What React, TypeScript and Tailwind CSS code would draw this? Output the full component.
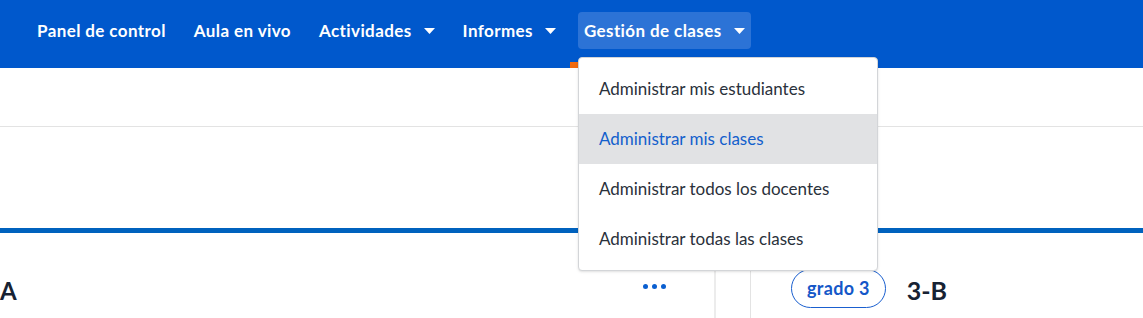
import { useState } from "react";

const navItems = [
  { label: "Panel de control", caret: false },
  { label: "Aula en vivo", caret: false },
  { label: "Actividades", caret: true },
  { label: "Informes", caret: true },
  { label: "Gestión de clases", caret: true, open: true },
];

const menuItems = [
  "Administrar mis estudiantes",
  "Administrar mis clases",
  "Administrar todos los docentes",
  "Administrar todas las clases",
];

function Caret() {
  return (
    <svg width="11" height="6" viewBox="0 0 11 6" className="ml-3 fill-white">
      <path d="M0 0h11L5.5 6z" />
    </svg>
  );
}

function App() {
  const [active] = useState(1);

  return (
    <div className="w-[1143px] h-[318px] overflow-hidden bg-white font-['Lato',sans-serif] text-[#1c2430]">
      <header className="h-[68px] bg-[#0058cc] flex items-start pt-3 pl-[31px]">
        <nav className="flex gap-4">
          {navItems.map((n) => (
            <div key={n.label} className="relative">
              <button
                className={`h-[37px] px-1.5 flex items-center rounded text-white font-bold text-[17px] tracking-[0.4px] ${
                  n.open ? "bg-[#2c73d6]" : ""
                }`}
              >
                {n.label}
                {n.caret && <Caret />}
              </button>
              {n.open && (
                <>
                  <div className="absolute left-[-8px] top-[50px] w-[10px] h-[6px] bg-[#f26b0f]" />
                  <div className="absolute left-0 top-[45px] z-10 w-[300px] bg-white border border-[#d3d5d8] rounded py-1.5 shadow-sm">
                    {menuItems.map((m, i) => (
                      <div
                        key={m}
                        className={`h-[50px] flex items-center px-5 text-[17px] ${
                          i === active ? "bg-[#e1e2e4] text-[#135fcc]" : "text-[#2a313b]"
                        }`}
                      >
                        {m}
                      </div>
                    ))}
                  </div>
                </>
              )}
            </div>
          ))}
        </nav>
      </header>

      <div className="h-[59px] border-b border-[#e3e3e3]" />
      <div className="h-[106px] border-b-[5px] border-[#0062be]" />

      <div className="flex pt-9">
        <div className="w-[716px] flex items-start justify-between pr-12 border-r-2 border-[#ececec] h-[60px]">
          <h2 className="mt-1 text-[24px] font-bold text-[#172233]">A</h2>
          <div className="flex gap-1 mt-[15px]">
            <span className="w-[5px] h-[5px] rounded-full bg-[#0a5fd0]" />
            <span className="w-[5px] h-[5px] rounded-full bg-[#0a5fd0]" />
            <span className="w-[5px] h-[5px] rounded-full bg-[#0a5fd0]" />
          </div>
        </div>
        <div className="ml-[34px] pl-[40px] border-l border-[#e3e3e3] flex items-start gap-[21px] h-[60px]">
          <span className="h-[39px] px-[15px] flex items-center rounded-full border border-[#1a5fcf] text-[#1457c8] font-bold text-[18px] tracking-[0.3px]">
            grado 3
          </span>
          <span className="mt-[3px] text-[25px] font-bold text-[#172233]">3-B</span>
        </div>
      </div>
    </div>
  );
}

export default App;
